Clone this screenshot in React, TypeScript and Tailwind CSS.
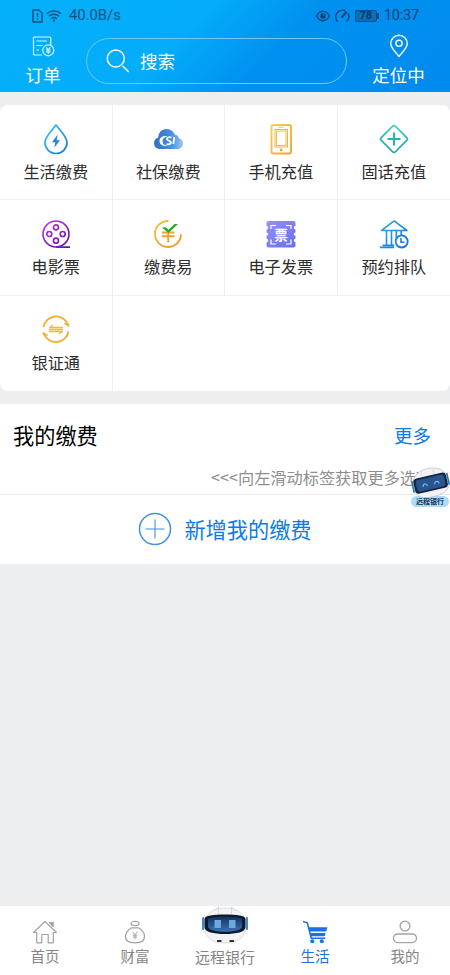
import { useState, type ReactNode } from "react"

type ServiceInfo = {
    name: string
    icon: ReactNode
}

type TabInfo = {
    name: string
    icon: ReactNode
}

const DropIcon = () => (
    <svg className="w-[30px] h-[32px]" viewBox="0 0 30 32" fill="none">
        <defs>
            <linearGradient id="drop" x1="0" y1="0" x2="1" y2="1">
                <stop offset="0" stopColor="#36c4f0" />
                <stop offset="1" stopColor="#1673e0" />
            </linearGradient>
        </defs>
        <path d="M15 2C11.5 7 4 13.200 4 19.500a11 11 0 0 0 22 0C26 13.200 18.500 7 15 2Z" stroke="url(#drop)" strokeWidth="1.7" strokeLinejoin="round" />
        <path d="M16.800 11.500 11 19.300h3.400l-1.200 5.500 5.800-7.600h-3.400Z" fill="#1e80e8" />
    </svg>
)

const CloudIcon = () => (
    <svg className="w-[32px] h-[32px]" viewBox="0 0 32 32" fill="none">
        <defs>
            <linearGradient id="cloud" x1="0" y1="0.500" x2="1" y2="0.500">
                <stop offset="0" stopColor="#2f6fc2" />
                <stop offset="0.600" stopColor="#4a8fdd" />
                <stop offset="1" stopColor="#9cc6f3" />
            </linearGradient>
        </defs>
        <path d="M7 26a6 6 0 0 1-.8-11.600C6.500 9.500 10 6 14.800 6c3.700 0 6.600 2.200 8 5.500 2.200.3 3.700 1.500 4.200 3.700 2.300.8 4 2.700 4 5.300 0 3-2.300 5.500-5.500 5.500Z" fill="url(#cloud)" />
        <path d="M15.500 13.300c-4.500-1.200-8 1.200-8 4.800 0 3.800 4 6 8.300 4.300-3 .3-5.300-1.300-5.300-4 0-2.600 2-4.600 5-5.100Z" fill="#fff" />
        <path d="M19.500 14.500c-3-.9-4.700.2-4.500 1.700.3 1.800 4.200 1.400 3.900 3.500-.2 1.600-2.300 2-4.500 1.300M22.300 14l-1 7" stroke="#fff" strokeWidth="1.800" />
    </svg>
)

const PhoneIcon = () => (
    <svg className="w-[30px] h-[32px]" viewBox="0 0 30 32" fill="none">
        <defs>
            <linearGradient id="phone" x1="0" y1="0" x2="1" y2="1">
                <stop offset="0" stopColor="#fbd04c" />
                <stop offset="1" stopColor="#efa32d" />
            </linearGradient>
        </defs>
        <rect x="5.500" y="2" width="19.500" height="28.500" rx="1.800" stroke="url(#phone)" strokeWidth="1.900" />
        <rect x="9" y="6.500" width="12.500" height="17.500" stroke="#f2b33e" strokeWidth="1" />
        <rect x="10.500" y="8" width="9.500" height="14.500" stroke="#f5bd45" strokeWidth="1" />
        <path d="M12.500 4.200h5" stroke="#f8c84c" strokeWidth="1" />
        <circle cx="15.200" cy="27" r="1.400" fill="#efa32d" />
    </svg>
)

const DiamondPlusIcon = () => (
    <svg className="w-[32px] h-[32px]" viewBox="0 0 32 32" fill="none">
        <defs>
            <linearGradient id="diamond" x1="0" y1="0" x2="1" y2="1">
                <stop offset="0" stopColor="#33cdc8" />
                <stop offset="1" stopColor="#16a5a0" />
            </linearGradient>
        </defs>
        <rect x="6" y="6" width="20" height="20" rx="2" transform="rotate(45 16 16)" stroke="url(#diamond)" strokeWidth="1.700" />
        <path d="M16 9.500v13M9.500 16h13" stroke="#22b5b1" strokeWidth="2" />
    </svg>
)

const FilmIcon = () => (
    <svg className="w-[32px] h-[32px]" viewBox="0 0 32 32" fill="none">
        <defs>
            <linearGradient id="film" x1="0" y1="0" x2="32" y2="32" gradientUnits="userSpaceOnUse">
                <stop offset="0" stopColor="#c743e2" />
                <stop offset="0.550" stopColor="#8a24c6" />
                <stop offset="1" stopColor="#5312a4" />
            </linearGradient>
        </defs>
        <g stroke="url(#film)" strokeWidth="1.700">
            <circle cx="16" cy="16" r="13" />
            <circle cx="16" cy="9.300" r="2.500" />
            <circle cx="9.300" cy="16" r="2.500" />
            <circle cx="22.700" cy="16" r="2.500" />
            <circle cx="16" cy="22.700" r="2.500" />
            <path d="M16 29.200h14" />
        </g>
    </svg>
)

const YuanCheckIcon = () => (
    <svg className="w-[32px] h-[32px]" viewBox="0 0 32 32" fill="none">
        <defs>
            <linearGradient id="yuan" x1="0" y1="0" x2="1" y2="1">
                <stop offset="0" stopColor="#f7bd3d" />
                <stop offset="1" stopColor="#ee9422" />
            </linearGradient>
        </defs>
        <path d="M16.500 3A13 13 0 1 0 29 16.500" stroke="url(#yuan)" strokeWidth="1.800" />
        <path d="M10 14.500h12.500M10 18.300h12.500M16.200 13v11.500" stroke="#f0a12c" strokeWidth="1.900" />
        <path d="m10 9.500 3.800-.2 2.700 2.400L22.500 6H26l-9.500 9Z" fill="#25ad27" />
    </svg>
)

const TicketIcon = () => (
    <svg className="w-[32px] h-[32px]" viewBox="0 0 32 32" fill="none">
        <defs>
            <linearGradient id="ticket" x1="0" y1="0" x2="1" y2="1">
                <stop offset="0" stopColor="#9690f5" />
                <stop offset="1" stopColor="#666fee" />
            </linearGradient>
        </defs>
        <path d="M3.500 3h25a2 2 0 0 1 2 2v3a1.700 1.700 0 0 0 0 3.400v3a1.700 1.700 0 0 0 0 3.400v3a1.700 1.700 0 0 0 0 3.400v3.300a2 2 0 0 1-2 2h-25a2 2 0 0 1-2-2v-3.300a1.700 1.700 0 0 0 0-3.400v-3a1.700 1.700 0 0 0 0-3.400v-3a1.700 1.700 0 0 0 0-3.400V5a2 2 0 0 1 2-2Z" fill="url(#ticket)" />
        <path d="M6 11V7.500h5M21 7.500h5V11M6 21.500V26h5M21 26h5v-4.500" stroke="#fff" strokeWidth="1.200" />
        <text x="16" y="21.500" textAnchor="middle" fontSize="13.500" fontWeight="700" fill="#fff">票</text>
    </svg>
)

const BankIcon = () => (
    <svg className="w-[32px] h-[32px]" viewBox="0 0 32 32" fill="none">
        <defs>
            <linearGradient id="bank" x1="0" y1="0" x2="32" y2="32" gradientUnits="userSpaceOnUse">
                <stop offset="0" stopColor="#29b6ee" />
                <stop offset="1" stopColor="#126bd9" />
            </linearGradient>
        </defs>
        <g stroke="url(#bank)" strokeWidth="1.600">
            <path d="M3.500 12.500 16.200 2.800l12.700 9.700Z" strokeLinejoin="round" />
            <path d="M8.500 13v14.300M13.500 13v14.300M18.300 13v7M23.200 13v4.300M4.500 27.400h11.800M1.800 29.400H16" />
            <circle cx="23.700" cy="23.500" r="6" strokeWidth="1.800" />
            <path d="M23 20v4.200h3.500" />
        </g>
    </svg>
)

const TransferIcon = () => (
    <svg className="w-[32px] h-[32px]" viewBox="0 0 32 32" fill="none">
        <g stroke="#f3ae32" strokeWidth="1.900">
            <path d="M3.500 13a12.800 12.800 0 0 1 24.500-2.500" />
            <path d="M28.500 17.500a12.800 12.800 0 0 1-24.500 2.500" />
        </g>
        <path d="m29 12.500-4.800-3 4.300.2ZM3 18.200l4.800 3-4.300-.2Z" fill="#f3ae32" stroke="#f3ae32" strokeWidth="0.800" />
        <path d="M9.500 13.500h13.500M9 15.500h14M9 17.500h13.500" stroke="#f5b63a" strokeWidth="1.300" />
        <path d="m9.500 13.500 3.500-2.300M22.500 17.500 19 19.800" stroke="#f5b63a" strokeWidth="1.300" />
    </svg>
)

const services: ServiceInfo[] = [
    { name: "生活缴费", icon: <DropIcon /> },
    { name: "社保缴费", icon: <CloudIcon /> },
    { name: "手机充值", icon: <PhoneIcon /> },
    { name: "固话充值", icon: <DiamondPlusIcon /> },
    { name: "电影票", icon: <FilmIcon /> },
    { name: "缴费易", icon: <YuanCheckIcon /> },
    { name: "电子发票", icon: <TicketIcon /> },
    { name: "预约排队", icon: <BankIcon /> },
    { name: "银证通", icon: <TransferIcon /> },
]

const HomeIcon = () => (
    <svg className="w-[26px] h-[26px]" viewBox="0 0 26 26" fill="none" stroke="#a3a3a3" strokeWidth="1.200" strokeLinejoin="round">
        <path d="m1.500 13.500 11.500-11 11.500 11h-3.200v10.300h-5.100v-8.300H9.800v8.300H4.700V13.500Z" />
        <path d="M17.500 3.500h3.700v4Z" fill="#a3a3a3" />
    </svg>
)

const WealthIcon = () => (
    <svg className="w-[26px] h-[26px]" viewBox="0 0 26 26" fill="none" stroke="#a3a3a3" strokeWidth="1.300">
        <ellipse cx="13" cy="4.500" rx="4" ry="2.100" />
        <path d="M9.500 8.800h7c3.500 2 6 5.200 6 8.700 0 4.200-3.300 6.300-9.500 6.300s-9.500-2.100-9.500-6.300c0-3.500 2.500-6.700 6-8.700Z" />
        <path d="m10.700 12.800 2.300 3 2.300-3M13 15.800v4.500M10.800 16.200h4.400M10.800 18h4.400" strokeWidth="1" />
    </svg>
)

const CartIcon = () => (
    <svg className="w-[28px] h-[26px]" viewBox="0 0 28 26" fill="none">
        <path d="m2 2.500 4.300 1.300 4 15.400h14" stroke="#1b70e4" strokeWidth="1.600" />
        <path d="M7.300 8.300h19.200l-1.300 4.300H8.400ZM8.900 14h15.800l-1.200 3.200H9.700Z" fill="#1b70e4" />
        <circle cx="11.300" cy="22.300" r="2" fill="#1b70e4" />
        <circle cx="20.800" cy="22.300" r="2" fill="#1b70e4" />
    </svg>
)

const UserIcon = () => (
    <svg className="w-[26px] h-[26px]" viewBox="0 0 26 26" fill="none" stroke="#a3a3a3" strokeWidth="1.300">
        <circle cx="13" cy="7" r="4.900" />
        <rect x="1.500" y="15" width="23" height="8.600" rx="4.300" />
    </svg>
)

const RobotIcon = () => (
    <svg className="w-[50px] h-[42px]" viewBox="0 0 50 42" fill="none">
        <defs>
            <linearGradient id="visor" x1="0" y1="0" x2="0" y2="1">
                <stop offset="0" stopColor="#17325c" />
                <stop offset="1" stopColor="#3873b2" />
            </linearGradient>
        </defs>
        <path d="M5 15C7 6 14 2 25 2s18 4 20 13v10c-2 8-9 12-20 12S7 33 5 25Z" fill="#f4f4f5" stroke="#d3d6d9" strokeWidth="0.800" />
        <path d="M15 4.500 18.500.5v8M31.500 8.500v-8l3.500 4" stroke="#cfd2d5" strokeWidth="0.700" />
        <rect x="2" y="11" width="2.200" height="13" rx="1" fill="#4c86c8" />
        <rect x="45.800" y="11" width="2.200" height="13" rx="1" fill="#4c86c8" />
        <path d="M4.500 13c0-3.500 9-4.500 20.500-4.500s20.500 1 20.500 4.500v8c0 5-9 7-20.500 7S4.500 26 4.500 21Z" fill="#0c1a30" />
        <path d="M8 13.500c0-2 8-2.700 17-2.700s17 .7 17 2.700v7c0 3.700-8 5.200-17 5.200S8 24.200 8 20.500Z" fill="url(#visor)" />
        <path d="M14.500 14h6.500v8h-6.500ZM29 14h6.500v8H29Z" fill="#6fa8de" />
        <path d="M17 35h4.500M29.500 35H34" stroke="#333" strokeWidth="2" />
    </svg>
)

const tabs: TabInfo[] = [
    { name: "首页", icon: <HomeIcon /> },
    { name: "财富", icon: <WealthIcon /> },
    { name: "远程银行", icon: <RobotIcon /> },
    { name: "生活", icon: <CartIcon /> },
    { name: "我的", icon: <UserIcon /> },
]

const StatusBar = () => (
    <div className="flex items-center h-[31px] pl-8 pr-8 font-['Roboto',sans-serif] text-[14.5px] text-[#06507f]">
        <svg className="w-[11px] h-[14px] mr-[3px]" viewBox="0 0 11 14" fill="none" stroke="currentColor">
            <path d="M1 1h5.800L10 4v9H1Z" strokeWidth="1.400" strokeLinejoin="round" />
            <path d="M5.500 4v4M5.500 9.300v1.500" strokeWidth="1.400" />
        </svg>
        <svg className="w-4 h-[14px] mr-[7px]" viewBox="0 0 16 14" fill="none" stroke="currentColor" strokeWidth="1.400">
            <path d="M.8 4.700a10.500 10.500 0 0 1 14.400 0M3 7.300a7.200 7.200 0 0 1 10 0M5.300 9.700a4 4 0 0 1 5.400 0" />
            <circle cx="8" cy="11.700" r="1.100" fill="currentColor" stroke="none" />
        </svg>
        <span className="mr-auto text-[14.800px]">40.0B/s</span>
        <svg className="w-[14px] h-[12px] mr-1 text-[#064375]" viewBox="0 0 14 12" fill="none" stroke="currentColor">
            <path d="M.7 6C3.500-.3 10.500-.3 13.300 6 10.500 12.300 3.500 12.300.7 6Z" strokeWidth="1.300" />
            <circle cx="7" cy="6" r="2.800" fill="currentColor" stroke="none" />
            <circle cx="8" cy="5" r="0.800" fill="#0694ef" stroke="none" />
        </svg>
        <svg className="w-4 h-[14px] mr-[5px] text-[#064375]" viewBox="0 0 16 14" fill="none" stroke="currentColor" strokeWidth="1.500">
            <path d="M3.500 12.500A6.700 6.700 0 0 1 11.500 2M14 4.500a6.700 6.700 0 0 1-1.500 8" />
            <path d="m7.500 8.500 5-5.500" strokeWidth="1.900" />
        </svg>
        <div className="flex items-center mr-[5px]">
            <div className="w-[22px] h-[12px] rounded-[2px] border border-[#064c84] bg-[#0870b8] text-[10.500px] font-bold leading-[10px] text-center text-[#033b6b]">78</div>
            <div className="w-[2px] h-[6px] bg-[#064c84]" />
        </div>
        <span className="-mr-[1px] text-[#064375] tracking-[-0.2px]">10:37</span>
    </div>
)

const Header = () => (
    <header className="h-[92px] bg-[linear-gradient(135deg,#05b0fa_0%,#04acf9_40%,#0091f0_60%,#008bee_100%)]">
        <StatusBar />
        <div className="flex text-white text-[17.500px] leading-[26px]">
            <div className="w-[86px] flex flex-col items-center pt-[4px]">
                <svg className="w-[23px] h-[23px]" viewBox="0 0 23 23" fill="none" stroke="#d9f6ff" strokeWidth="1.200">
                    <path d="M10 20H2.500a1 1 0 0 1-1-1V3a1 1 0 0 1 1-1h15.300a1 1 0 0 1 1 1v7" />
                    <path d="M4.500 6h10.500M4.500 10.500h6M4.500 15H7" />
                    <circle cx="16.300" cy="15.300" r="5.500" />
                    <path d="m14.300 12.300 2 2.500 2-2.500M16.300 14.500v4.300M14 15h4.600M14 16.900h4.600" />
                </svg>
                <span className="mt-[4px]">订单</span>
            </div>
            <div className="w-[261px] h-[46px] mt-[7px] pl-[19px] flex items-center border border-[#6ccbf9] rounded-full">
                <svg className="w-6 h-6 mr-[10px]" viewBox="0 0 24 24" fill="none" stroke="#fff" strokeWidth="1.500">
                    <circle cx="9.800" cy="9.500" r="8.500" />
                    <path d="m16.700 17 6 6" />
                </svg>
                <span>搜索</span>
            </div>
            <div className="grow flex flex-col items-center pt-[3px]">
                <svg className="w-[20px] h-[24px]" viewBox="0 0 20 24" fill="none" stroke="#fff" strokeWidth="1.400">
                    <path d="M10 22.500C7 18.500 1.700 14 1.700 9.500a8.300 8.300 0 0 1 16.600 0c0 4.500-5.300 9-8.300 13Z" strokeLinejoin="round" />
                    <circle cx="10" cy="9.300" r="3.100" />
                </svg>
                <span className="mt-[4px]">定位中</span>
            </div>
        </div>
    </header>
)

// Плавающая кнопка поверх списка
const FloatingRobot = () => (
    <div className="absolute right-0 top-[61px] w-[39px] h-[41px]">
        <svg className="w-[39px] h-[32px]" viewBox="0 0 39 32" fill="none">
            <g transform="rotate(-13 19 18)">
                <path d="M2.500 15C4 7 11 3.500 19.500 3.500S35.500 7 37 15v9c-2 6-8 8-17.500 8S4.500 30 2.500 24Z" fill="#f1f3f5" stroke="#c3c8cd" strokeWidth="0.800" />
                <path d="M13 5v5M25 5v5" stroke="#d0d4d8" strokeWidth="0.700" />
                <path d="M1.500 12v12M37.500 12v12" stroke="#2876bd" strokeWidth="1.600" />
                <rect x="2.800" y="10.500" width="33.500" height="15.500" rx="4" fill="#13243e" />
                <rect x="5" y="12.300" width="29" height="12" rx="3" fill="#28558e" />
                <path d="M11.500 20.500c-.5-3.500 4.500-3.500 4.300 0M23.500 20.500c-.5-3.500 4.500-3.500 4.300 0" stroke="#8ecbff" />
            </g>
        </svg>
        <div className="-mt-[1px] h-[11px] w-[38px] rounded-full bg-[#a9dbfb] text-[7px] leading-[10px] font-bold text-center text-[#1b3550]">远程银行</div>
    </div>
)

export default function App() {
    const [activeTab, setActiveTab] = useState("生活")

    return (
        <div className="flex flex-col w-[450px] h-[975px] overflow-hidden bg-[#edeef0] font-['Noto_Sans_CJK_SC',sans-serif] text-[#2d2d2d]">
            <Header />
            <div className="grid grid-cols-4 grid-rows-3 mt-[13px] h-[286px] shrink-0 rounded-[8px] bg-white overflow-hidden">
                {services.map((service, index) => (
                    <div key={service.name}
                    className={`flex flex-col items-center pt-[18px] border-[#f0f0f1] ${
                    index % 4 !== 3 ? 'border-r' : ''} ${index < 8 ? 'border-b' : ''}`}>
                        {service.icon}
                        <span className="mt-[4px] text-[16.200px] leading-6">{service.name}</span>
                    </div>
                ))}
            </div>
            <section className="relative mt-[13px] h-[160px] shrink-0 bg-white">
                <div className="flex items-center justify-between h-[62px] pl-[13px] pr-[19px]">
                    <h2 className="text-[21.200px] leading-8 text-black">我的缴费</h2>
                    <button className="text-[18.500px] leading-8 text-[#0c7be8]">更多</button>
                </div>
                <div className="h-[29px] pl-[211px] text-[16.200px] leading-[22px] text-[#8e8e8e] whitespace-nowrap border-b border-[#e8e9ea]">
                    {"<<<向左滑动标签获取更多选项"}
                </div>
                <button className="flex items-center justify-center w-full h-[67px] text-[21.200px] text-[#0c7be8]">
                    <svg className="w-[34px] h-[34px] mr-3" viewBox="0 0 34 34" fill="none" stroke="#3e8fe8">
                        <circle cx="17" cy="17" r="15.500" strokeWidth="1.500" />
                        <path d="M17 7.500v19M7.500 17h19" strokeWidth="1.100" />
                    </svg>
                    新增我的缴费
                </button>
                <FloatingRobot />
            </section>
            <nav className="mt-auto h-[69px] shrink-0 grid grid-cols-5 bg-white">
                {tabs.map((tab) => (
                    <button key={tab.name} onClick={() => setActiveTab(tab.name)}
                    className={`flex flex-col items-center justify-end ${
                    tab.name === '远程银行' ? 'pb-[12px] text-[15px]' : 'pb-[13px] text-[14.500px]'} ${
                    activeTab === tab.name ? 'text-[#1b70e4]' : 'text-[#858585]'}`}>
                        {tab.icon}
                        <span className={`leading-5 ${tab.name === '远程银行' ? '-mt-px' : 'mt-px'}`}>{tab.name}</span>
                    </button>
                ))}
            </nav>
        </div>
    )
}
